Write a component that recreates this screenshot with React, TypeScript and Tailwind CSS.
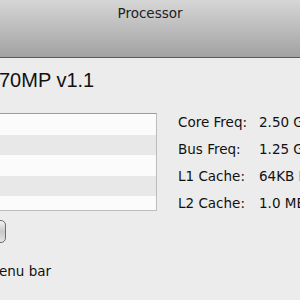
import React from 'react';

const specs = [
  { label: 'Core Freq:', value: '2.50 GHz' },
  { label: 'Bus Freq:', value: '1.25 GHz' },
  { label: 'L1 Cache:', value: '64KB I / 32KB D' },
  { label: 'L2 Cache:', value: '1.0 MB' },
];

const rowHeights = ['h-[21px]', 'h-[20px]', 'h-[21px]', 'h-[20px]', 'h-[21px]'];

const App: React.FC = () => {
  return (
    <div className="w-[300px] h-[300px] overflow-hidden bg-[#ececec] text-[#111] font-['DejaVu_Sans',sans-serif]">
      {/* title bar */}
      <div className="h-[58px] border-b border-[#5a5a5a] bg-gradient-to-b from-[#d6d6d6] via-[#bcbcbc] to-[#a2a2a2] flex justify-center">
        <span className="mt-[4px] text-[13.5px] leading-[18px] text-[#222]">Processor</span>
      </div>

      {/* content */}
      <div className="flex flex-col">
        <h1 className="mt-[11px] ml-[-1px] text-[20px] leading-[22px] font-['Liberation_Sans',sans-serif] whitespace-nowrap">
          70MP v1.1
        </h1>

        <div className="flex mt-[22px]">
          <div className="w-[159px] h-[98px] ml-[-2px] overflow-hidden bg-white border-t border-[#9c9c9c] border-r border-b border-r-[#bcbcbc] border-b-[#bcbcbc] shrink-0">
            {rowHeights.map((h, i) => (
              <div key={i} className={`${h} ${i % 2 === 1 ? 'bg-[#e8e8e8]' : 'bg-[#fbfbfb]'}`} />
            ))}
          </div>

          <div className="ml-[21px] mt-[-4px] grid grid-cols-[81px_auto] auto-rows-[27px] items-center text-[13.5px] whitespace-nowrap">
            {specs.map((s) => (
              <React.Fragment key={s.label}>
                <span>{s.label}</span>
                <span>{s.value}</span>
              </React.Fragment>
            ))}
          </div>
        </div>

        <div className="mt-[3px] ml-[-16px] w-[22px] h-[23px] rounded-[5px] border border-[#6d6d6d] bg-gradient-to-b from-[#f2f2f2] via-[#c9c9c9] to-[#e4e4e4]" />

        <span className="mt-[20px] ml-[-1px] text-[13.5px] leading-[16px] whitespace-nowrap">enu bar</span>
      </div>
    </div>
  );
};

export default App;
